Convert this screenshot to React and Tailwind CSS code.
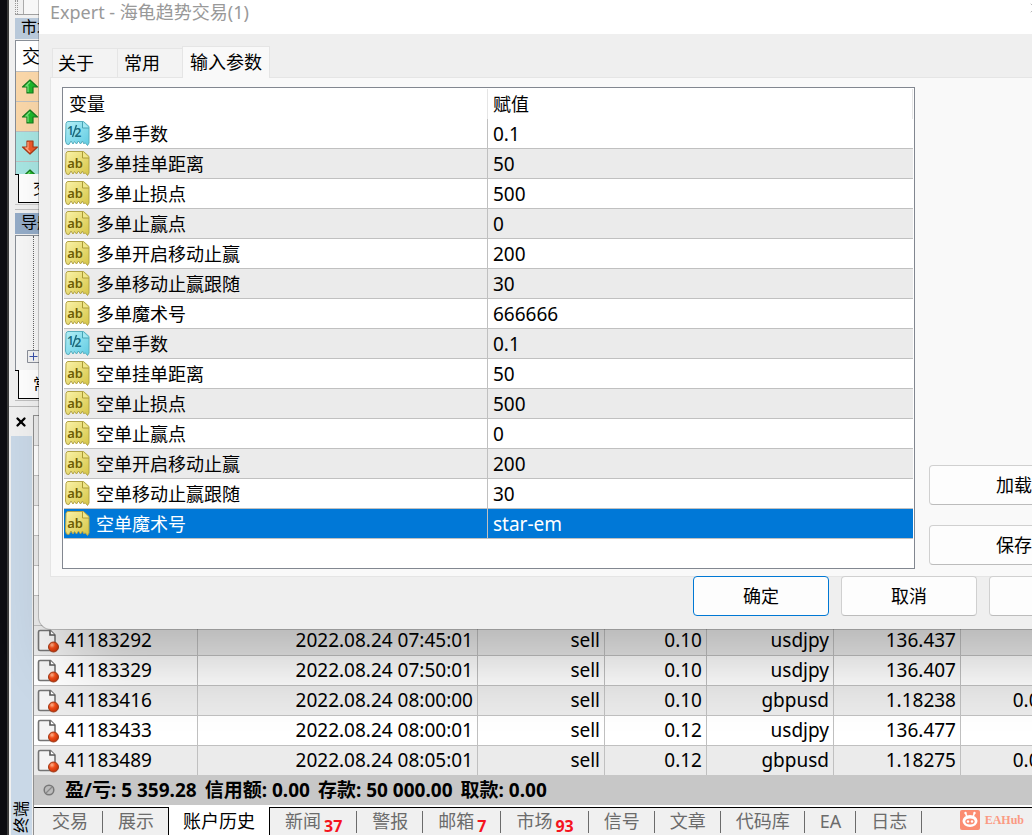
import { X } from 'lucide-react';
import clsx from 'clsx';

const params = [
  { name: '多单手数', value: '0.1', type: 'double' },
  { name: '多单挂单距离', value: '50' },
  { name: '多单止损点', value: '500' },
  { name: '多单止赢点', value: '0' },
  { name: '多单开启移动止赢', value: '200' },
  { name: '多单移动止赢跟随', value: '30' },
  { name: '多单魔术号', value: '666666' },
  { name: '空单手数', value: '0.1', type: 'double' },
  { name: '空单挂单距离', value: '50' },
  { name: '空单止损点', value: '500' },
  { name: '空单止赢点', value: '0' },
  { name: '空单开启移动止赢', value: '200' },
  { name: '空单移动止赢跟随', value: '30' },
  { name: '空单魔术号', value: 'star-em', selected: true }
];

const orders = [
  ['41183292', '2022.08.24 07:45:01', 'sell', '0.10', 'usdjpy', '136.437', ''],
  ['41183329', '2022.08.24 07:50:01', 'sell', '0.10', 'usdjpy', '136.407', ''],
  ['41183416', '2022.08.24 08:00:00', 'sell', '0.10', 'gbpusd', '1.18238', '0.00000'],
  ['41183433', '2022.08.24 08:00:01', 'sell', '0.12', 'usdjpy', '136.477', ''],
  ['41183489', '2022.08.24 08:05:01', 'sell', '0.12', 'gbpusd', '1.18275', '0.00000']
];

const terminalTabs = [
  { label: '交易' },
  { label: '展示', last: true },
  { label: '账户历史', active: true },
  { label: '新闻', count: 37 },
  { label: '警报' },
  { label: '邮箱', count: 7 },
  { label: '市场', count: 93 },
  { label: '信号' },
  { label: '文章' },
  { label: '代码库' },
  { label: 'EA' },
  { label: '日志' }
];

const quotes = [
  { up: true, bg: 'bg-[#fad7a9]' },
  { up: true, bg: 'bg-[#fad7a9]' },
  { up: false, bg: 'bg-[#a8e6e3]' },
  { up: true, bg: 'bg-[#a8e6e3]' }
];

function ParamIcon({ type }) {
  const isDouble = type === 'double';
  return (
    <svg viewBox="0 0 25 25" className="h-[25px] w-[25px] shrink-0" aria-hidden="true">
      <defs>
        <linearGradient id="paramYellow" x1="0" y1="0" x2="1" y2="1">
          <stop offset="0" stopColor="#fbf3a8" />
          <stop offset="1" stopColor="#d5c444" />
        </linearGradient>
        <linearGradient id="paramBlue" x1="0" y1="0" x2="1" y2="1">
          <stop offset="0" stopColor="#b4eff7" />
          <stop offset="1" stopColor="#5fcbe2" />
        </linearGradient>
      </defs>
      <path
        d="M3 .5H18.500L24 5.500V22L22.500 24.500 20.500 22 18.500 22.500 17.500 20 15.500 23 13.500 20 11.500 23 9.500 20.500 8 23 6 20 4 23.500 1.500 23 .5 20 1 2.500Q1.500.5 3 .5z"
        fill={isDouble ? 'url(#paramBlue)' : 'url(#paramYellow)'}
        stroke={isDouble ? '#58aebd' : '#b3a447'}
      />
      <path
        d="M17.500 1v6H24"
        fill={isDouble ? '#a5e9f3' : '#f1e78b'}
        stroke={isDouble ? '#48a3b4' : '#aa9b37'}
      />
      {isDouble ? (
        <g fill="#186a7d" fontFamily="Noto Sans, sans-serif" fontWeight="600">
          <text x="2" y="14" fontSize="12">1</text>
          <path d="M11.500 4 7.500 16" stroke="#186a7d" strokeWidth="1.4" />
          <text x="9.500" y="16" fontSize="12">2</text>
        </g>
      ) : (
        <text
          x="10"
          y="17"
          textAnchor="middle"
          fontSize="13"
          fontWeight="600"
          fontFamily="Noto Sans, sans-serif"
          fill="#6d5d05"
        >
          ab
        </text>
      )}
    </svg>
  );
}

function ArrowIcon({ up }) {
  return (
    <svg viewBox="0 0 18 16" className="h-4 w-[18px] shrink-0" aria-hidden="true">
      <path
        d={up ? 'M9 1 16.500 8H12v6H6V8H1.500z' : 'M9 15 1.500 8H6V2h6v6h4.500z'}
        fill={up ? '#1fb62b' : '#ef5a2a'}
        stroke={up ? '#167a1e' : '#a83b18'}
        strokeWidth="1.2"
        strokeLinejoin="round"
      />
      <path
        d={up ? 'M9 3 5 7h2v6' : 'M7 3v6H5l4 4'}
        fill="none"
        stroke={up ? '#7be37f' : '#ffab86'}
        strokeWidth="1.2"
      />
    </svg>
  );
}

function OrderIcon() {
  return (
    <svg viewBox="0 0 22 24" className="h-6 w-[22px] shrink-0" aria-hidden="true">
      <defs>
        <radialGradient id="orderDot" cx=".35" cy=".3" r=".7">
          <stop offset="0" stopColor="#ffb48c" />
          <stop offset=".45" stopColor="#ee4b18" />
          <stop offset="1" stopColor="#c53408" />
        </radialGradient>
      </defs>
      <path
        d="M3 1.500h10.500L18 6v15.500H3q-1.500 0-1.500-1.500V3Q1.500 1.500 3 1.500z"
        fill="#f4f4f4"
        stroke="#747474"
        strokeWidth="1.600"
      />
      <path d="M13 1.500V6h5" fill="#fff" stroke="#555" strokeWidth="1.600" />
      <circle cx="16.500" cy="18" r="5" fill="url(#orderDot)" stroke="#9d3a19" />
    </svg>
  );
}

function EaHubLogo() {
  return (
    <svg viewBox="0 0 20 20" className="h-5 w-5" aria-hidden="true">
      <rect width="20" height="20" rx="2" fill="#fb8d72" />
      <path d="M7 7 5.500 3M13 7l1.500-4" stroke="#fff" strokeWidth="1.500" />
      <circle cx="5.500" cy="3" r="1.200" fill="#fff" />
      <circle cx="14.500" cy="3" r="1.200" fill="#fff" />
      <ellipse cx="10" cy="11" rx="7.500" ry="6" fill="#fff" />
      <ellipse cx="10" cy="11.500" rx="4.700" ry="3" fill="#fb8d72" />
      <circle cx="8" cy="11.500" r="1.200" fill="#fff" />
      <circle cx="12" cy="11.500" r="1.200" fill="#fff" />
    </svg>
  );
}

function DialogButton({ children, primary, className, ...props }) {
  return (
    <button
      type="button"
      className={clsx(
        'flex h-10 shrink-0 items-center justify-center rounded-[4px] border bg-[#fdfdfd]',
        primary ? 'border-[#0078d4]' : 'border-[#d0d0d0] border-b-[#bcbcbc]',
        className
      )}
      {...props}
    >
      {children}
    </button>
  );
}

function PanelTab({ children }) {
  return (
    <div className="flex h-[30px] shrink-0">
      <span className="w-[3px] border-t border-black" />
      <button type="button" className="h-[29px] flex-1 border-b border-l border-black bg-white pl-[14px] text-left text-[16px]">
        {children}
      </button>
    </div>
  );
}

function SidePanels() {
  return (
    <div className="flex h-[406px] shrink-0 flex-col pl-[6px]">
      <div className="flex h-[15px] shrink-0 border-b border-[#a0a0a0]">
        <span className="w-[3px] border-x border-dotted border-[#999]" />
        <span className="ml-[5px] flex-1 border-l border-[#aaa] bg-[#f7f7f7]" />
      </div>
      <section className="mt-[3px] flex h-[187px] shrink-0 flex-col border-b border-[#ccc]">
        <h2 className="h-[21px] shrink-0 bg-[#b9c9da] pl-[6px] text-[16px] leading-[18px]">市场</h2>
        <div className="mt-px min-h-0 flex-1 overflow-hidden border-l border-t border-[#888e96] bg-white">
          <div className="h-[30px] pl-[6px] leading-[31px]">交易</div>
          {quotes.map((quote, index) => (
            <div
              key={index}
              className={clsx('flex h-[30px] items-center border-t border-[#c0c0c0] pl-[5px]', quote.bg)}
            >
              <ArrowIcon up={quote.up} />
            </div>
          ))}
        </div>
        <PanelTab>交易</PanelTab>
      </section>
      <section className="mt-[4px] flex h-[192px] shrink-0 flex-col border-t border-b border-[#c0c0c0] pt-[3px]">
        <h2 className="h-[21px] shrink-0 bg-[#94acc8] pl-[6px] text-[16px] leading-[18px]">导航</h2>
        <div className="mt-px flex min-h-0 flex-1 flex-col border-l border-t border-[#888e96] bg-[#f7f7f7]">
          <span className="ml-[17px] h-[114px] border-l border-dotted border-[#666]" />
          <svg viewBox="0 0 13 13" className="ml-[11px] h-[13px] w-[13px]" aria-hidden="true">
            <path d="M.5.5h12v12H.5z" fill="#f3f3f3" stroke="#8b8f99" />
            <path d="M2.500 6.500h8M6.500 2.500v8" stroke="#3850a8" />
          </svg>
        </div>
        <PanelTab>常用</PanelTab>
      </section>
    </div>
  );
}

function Terminal() {
  return (
    <section className="flex min-h-0 flex-1 border-t border-[#bbb]">
      <div className="flex w-6 shrink-0 flex-col items-center">
        <button type="button" aria-label="Close" className="flex h-[29px] w-full items-center justify-center">
          <X className="h-[14px] w-[14px]" strokeWidth={4} />
        </button>
        <div className="flex w-[21px] flex-1 items-end justify-center overflow-hidden bg-[#c9d8e7]">
          <span className="rotate-180 pt-[2px] text-[16px] leading-[18px] [text-orientation:sideways] [writing-mode:vertical-rl]">
            终端
          </span>
        </div>
      </div>
      <div className="mt-[8px] flex min-w-0 flex-1 flex-col border-l border-t border-[#8f8f8f]">
        <div className="min-h-0 flex-1 overflow-hidden bg-[#ebebeb]">
          <table className="w-[1054px] table-fixed border-separate border-spacing-0">
            <colgroup>
              <col className="w-[164px]" />
              <col className="w-[280px]" />
              <col className="w-[127px]" />
              <col className="w-[102px]" />
              <col className="w-[127px]" />
              <col className="w-[127px]" />
              <col className="w-[127px]" />
            </colgroup>
            <tbody>
              {[0, 1, 2, 3, 4, 5, 6].map((row) => (
                <tr key={row} className="odd:bg-[#ebebeb] even:bg-white" aria-hidden="true">
                  <td colSpan={7} className="h-[30px] border-b border-[#c0c0c0] p-0" />
                </tr>
              ))}
              {orders.map(([id, ...cells], index) => (
                <tr key={id} className={index % 2 ? 'bg-white' : 'bg-[#ebebeb]'}>
                  <td className="h-[30px] border-b border-r border-[#c0c0c0] p-0 pl-[3px] text-[19px] leading-[29px]">
                    <div className="flex h-[29px] items-center gap-[6px]">
                      <OrderIcon />
                      {id}
                    </div>
                  </td>
                  {cells.map((cell, column) => (
                    <td
                      key={column}
                      className="h-[30px] border-b border-r border-[#c0c0c0] p-0 pr-[4px] text-right text-[19px] leading-[29px]"
                    >
                      {cell}
                    </td>
                  ))}
                </tr>
              ))}
            </tbody>
          </table>
        </div>
        <div className="flex h-[30px] shrink-0 items-center gap-2 bg-[#c7c7c7] pl-[9px] text-[19px] leading-[28px] font-bold whitespace-nowrap">
          <svg viewBox="0 0 12 12" className="mr-[2px] h-3 w-3" aria-hidden="true">
            <circle cx="6" cy="6" r="4.800" fill="#bbb" stroke="#777" strokeWidth="1.500" />
            <path d="m3 9 6-6" stroke="#888" strokeWidth="1.300" />
          </svg>
          <span>盈/亏: 5 359.28</span>
          <span>信用额: 0.00</span>
          <span>存款: 50 000.00</span>
          <span>取款: 0.00</span>
        </div>
        <nav className="flex h-[30px] shrink-0 border-t-2 border-white bg-[#f0f0f0] whitespace-nowrap text-[#6b6b6b]">
          {terminalTabs.map((tab) => (
            <button
              key={tab.label}
              type="button"
              className={clsx(
                'flex items-center',
                tab.active
                  ? 'border-x border-black bg-white px-[14px] text-black'
                  : 'border-t border-black first:pl-[3px]'
              )}
            >
              <span
                className={clsx(
                  'flex h-[22px] items-center',
                  !tab.active && 'pr-[14px] pl-[15px]',
                  !tab.active && !tab.last && 'border-r border-[#6b6b6b]'
                )}
              >
                {tab.label}
                {tab.count && (
                  <span className="ml-[3px] pt-[8px] text-[16px] leading-[14px] font-bold text-[#f5141e]">
                    {tab.count}
                  </span>
                )}
              </span>
            </button>
          ))}
          <div className="flex flex-1 items-center justify-end gap-[5px] border-t border-black pr-[8px] pb-[4px] font-['Liberation_Serif',serif] text-[12px] font-bold text-[#fb9a83]">
            <EaHubLogo />
            EAHub
          </div>
        </nav>
      </div>
    </section>
  );
}

function ExpertDialog() {
  return (
    <div
      role="dialog"
      aria-label="Expert"
      className="absolute top-0 -right-[106px] left-[39px] flex flex-col rounded-b-[12px] bg-[#efefef] shadow-[0_0_0_1px_rgba(0,0,0,0.2),0_62px_64px_-30px_rgba(0,0,0,0.23)]"
    >
      <div className="flex h-[34px] justify-between bg-white pr-[95px] pl-[11px] text-[#999]">
        <h1 className="leading-[24px]">Expert - 海龟趋势交易(1)</h1>
        <button type="button" aria-label="Close" className="h-4">
          <X className="h-4 w-4" strokeWidth={1} />
        </button>
      </div>
      <div role="tablist" className="mt-[12px] flex items-end pl-[13px]">
        <button type="button" role="tab" className="h-[29px] w-[65px] border-t border-l border-[#e5e5e5] bg-[#f3f3f3] pl-[5px] text-left">
          关于
        </button>
        <button type="button" role="tab" className="h-[29px] w-[65px] border-t border-l border-[#e5e5e5] bg-[#f3f3f3] pl-[6px] text-left">
          常用
        </button>
        <button
          type="button"
          role="tab"
          aria-selected="true"
          className="relative z-10 -mb-px h-[32px] border border-b-0 border-[#e5e5e5] bg-[#f9f9f9] px-[7px]"
        >
          输入参数
        </button>
      </div>
      <div className="mr-[12px] ml-[11px] flex gap-[14px] border border-[#e5e5e5] bg-[#f9f9f9] pt-[9px] pr-[26px] pb-[7px] pl-[11px]">
        <div className="h-[482px] min-w-0 flex-1 border border-[#828790] bg-white p-px">
          <table className="w-full table-fixed border-separate border-spacing-0 text-left">
            <colgroup>
              <col className="w-[424px]" />
              <col />
            </colgroup>
            <thead>
              <tr>
                <th className="h-[30px] border-r border-[#e5e5e5] p-0 pl-[5px] font-normal">变量</th>
                <th className="h-[30px] border-r border-[#e5e5e5] p-0 pl-[5px] font-normal">赋值</th>
              </tr>
            </thead>
            <tbody>
              {params.map(({ name, value, type, selected }) => (
                <tr
                  key={name}
                  className={selected ? 'bg-[#0078d7] text-white' : 'odd:bg-white even:bg-[#ebebeb]'}
                >
                  <td className="h-[30px] border-r border-b border-[#c0c0c0] p-0 pl-px">
                    <div className="flex h-[29px] items-center gap-[6px]">
                      <ParamIcon type={type} />
                      <span className="pt-[2px] leading-[27px]">{name}</span>
                    </div>
                  </td>
                  <td className="h-[30px] border-b border-[#c0c0c0] p-0 pt-[2px] pl-[5px] text-[19px] leading-[27px]">
                    {value}
                  </td>
                </tr>
              ))}
            </tbody>
          </table>
        </div>
        <div className="flex w-[170px] flex-col justify-end gap-5 pb-[4px]">
          <DialogButton>加载</DialogButton>
          <DialogButton>保存</DialogButton>
        </div>
      </div>
      <div className="relative -mt-px flex justify-end gap-3 pr-[13px] pb-[13px]">
        <DialogButton primary className="w-[136px]">确定</DialogButton>
        <DialogButton className="w-[136px]">取消</DialogButton>
        <DialogButton className="w-[136px]" aria-label="重设" />
      </div>
    </div>
  );
}

export default function App() {
  return (
    <div className="relative flex h-screen overflow-hidden bg-[#f0f0f0] font-['Noto_Sans','Noto_Sans_CJK_SC',sans-serif] text-[18px] text-black">
      <div className="w-[9px] shrink-0 border-r-2 border-[#3c3c3c] bg-[#0d0d12]" />
      <main className="flex min-w-0 flex-1 flex-col">
        <SidePanels />
        <Terminal />
      </main>
      <ExpertDialog />
    </div>
  );
}
